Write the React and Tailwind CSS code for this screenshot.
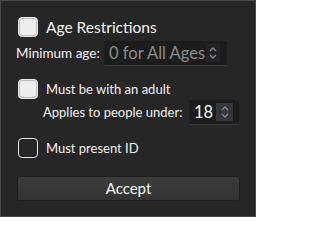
import React from "react";

const font = { fontFamily: 'Lato, "Noto Sans", sans-serif' };

function Check({ checked }) {
  return (
    <span
      className={`block w-[20px] h-[20px] rounded-[4px] border-[1.5px] border-[#e8e8e8] shrink-0 ${
        checked ? "bg-[#ededed] shadow-[inset_0_0_0_1px_#bdbdbd]" : "bg-[#262626]"
      }`}
    />
  );
}

function Chevrons({ className }) {
  return (
    <span className={`flex items-center justify-center shrink-0 ${className}`}>
      <svg width="10" height="16" viewBox="0 0 10 16" fill="none" stroke="#8a8a8a" strokeWidth="1.3">
        <path d="M2 6 L5 3 L8 6" />
        <path d="M2 10 L5 13 L8 10" />
      </svg>
    </span>
  );
}

export default function App() {
  return (
    <div
      className="w-[256px] h-[217px] bg-[#262626] border border-[#484848] text-[#f2f2f2] flex flex-col whitespace-nowrap overflow-hidden"
      style={font}
    >
      <div className="flex items-center gap-[8px] ml-[17px] mt-[16px]">
        <Check checked />
        <span className="text-[15.5px] leading-[20px]">Age Restrictions</span>
      </div>

      <div className="flex items-center ml-[15px] mt-[4px]">
        <span className="text-[13.5px] w-[88px] shrink-0">Minimum age:</span>
        <div className="flex items-center w-[123px] h-[25px] bg-[#1c1c1c] rounded-[2px] border-b border-[#3c3c3c] pl-[5px] shrink-0">
          <span className="text-[16.5px] text-[#8c8c8c] flex-1">0 for All Ages</span>
          <Chevrons className="w-[14px] h-[18px] bg-[#232326] mr-[7px]" />
        </div>
      </div>

      <div className="flex items-center gap-[8px] ml-[17px] mt-[13px]">
        <Check checked />
        <span className="text-[13px] leading-[20px]">Must be with an adult</span>
      </div>

      <div className="flex items-center ml-[42px] mt-[1px]">
        <span className="text-[13px] w-[146px] shrink-0">Applies to people under:</span>
        <div className="flex items-center w-[50px] h-[25px] bg-[#1c1c1c] rounded-[2px] border-b border-[#3c3c3c] pl-[5px] shrink-0">
          <span className="text-[16.5px] text-[#f4f4f4] flex-1">18</span>
          <Chevrons className="w-[17px] h-[18px] bg-[#35353d] mr-[6px]" />
        </div>
      </div>

      <div className="flex items-center gap-[8px] ml-[17px] mt-[13px]">
        <Check />
        <span className="text-[13px] leading-[20px]">Must present ID</span>
      </div>

      <button className="mt-[18px] ml-[16px] w-[223px] h-[25px] shrink-0 rounded-[2px] border border-[#1e1e1e] bg-[linear-gradient(#3c3c3c,#333333)] text-[15px] text-[#f4f4f4] flex items-center justify-center">
        Accept
      </button>
    </div>
  );
}
